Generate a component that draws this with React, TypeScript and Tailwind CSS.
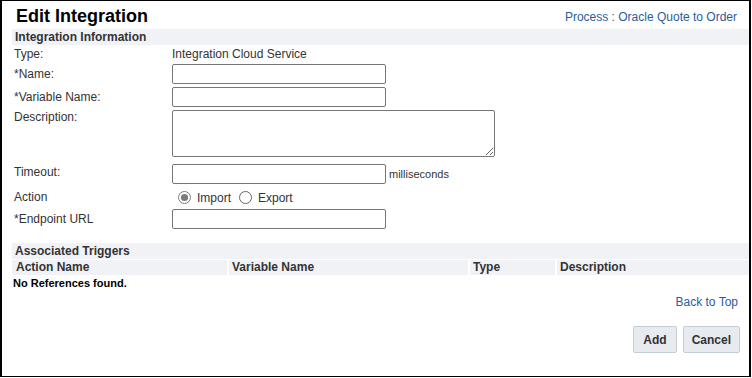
import React from 'react';

const Radio: React.FC<{ checked?: boolean }> = ({ checked }) => (
  <svg width="13" height="13" viewBox="0 0 13 13" className="shrink-0">
    <circle cx="6.5" cy="6.5" r="6" fill="#fff" stroke={checked ? '#7a7a7a' : '#666'} strokeWidth="1" />
    {checked && <circle cx="6.5" cy="6.5" r="3.6" fill="#7b7b7b" />}
  </svg>
);

const inputCls = 'block w-[214px] h-[20px] border border-[#767676] rounded-[2px] bg-white px-1 text-[12px] outline-none';

export default function App() {
  return (
    <div className="w-[751px] h-[377px] border-l-2 border-r-2 border-t border-b border-black bg-white text-[#333] font-['Liberation_Sans',Arial,sans-serif] text-[12px] flex flex-col">
      {/* page header */}
      <div className="h-[28px] flex justify-between items-start pl-[14px] pr-[12px]">
        <h1 className="mt-[5px] text-[18px] leading-[21px] font-bold text-black">Edit Integration</h1>
        <a href="#" className="mt-[8px] leading-[16px] text-[#2b5b9c]">Process : Oracle Quote to Order</a>
      </div>

      <div className="ml-[10px] h-[16px] bg-[#f1f2f6] pl-[3px] font-bold leading-[16px]">Integration Information</div>

      <div className="pl-[12px]">
        <div className="h-[17px] flex items-center">
          <span className="w-[158px]">Type:</span>
          <span>Integration Cloud Service</span>
        </div>
        <div className="h-[23px] flex items-center">
          <label className="w-[158px]">*Name:</label>
          <input className={inputCls} />
        </div>
        <div className="h-[23px] flex items-center">
          <label className="w-[158px]">*Variable Name:</label>
          <input className={inputCls} />
        </div>
        <div className="h-[51px] flex items-start">
          <label className="w-[158px] mt-[1px] leading-[16px]">Description:</label>
          <textarea className="block mt-[2px] w-[323px] h-[47px] border border-[#767676] rounded-[2px] bg-white px-1 text-[12px] outline-none" />
        </div>
        <div className="h-[27px] flex items-start">
          <label className="w-[158px] mt-[5px] leading-[16px]">Timeout:</label>
          <div className="mt-[5px] flex items-center gap-[3px]">
            <input className={inputCls} />
            <span className="text-[11px]">milliseconds</span>
          </div>
        </div>
        <div className="h-[22px] flex items-center">
          <span className="w-[158px]">Action</span>
          <div className="flex items-center pl-[6px] pt-[1px]">
            <Radio checked />
            <span className="ml-[6px] mr-[8px]">Import</span>
            <Radio />
            <span className="ml-[6px]">Export</span>
          </div>
        </div>
        <div className="h-[22px] flex items-center">
          <label className="w-[158px]">*Endpoint URL</label>
          <input className={inputCls} />
        </div>
      </div>

      <div className="mt-[13px] ml-[10px] h-[16px] bg-[#f1f2f6] pl-[3px] font-bold leading-[16px]">Associated Triggers</div>
      <div className="mt-[1px] ml-[10px] h-[15px] flex gap-[2px] font-bold leading-[15px]">
        <div className="w-[215px] bg-[#f1f2f6] pl-[4px]">Action Name</div>
        <div className="w-[239px] bg-[#f1f2f6] pl-[3px]">Variable Name</div>
        <div className="w-[85px] bg-[#f1f2f6] pl-[3px]">Type</div>
        <div className="flex-1 bg-[#f1f2f6] pl-[3px]">Description</div>
      </div>
      <div className="pl-[11px] h-[16px] leading-[16px] text-[11px] font-bold text-black">No References found.</div>

      <div className="mt-[3px] h-[16px] flex justify-end pr-[11px] leading-[16px]">
        <a href="#" className="text-[#2b5b9c]">Back to Top</a>
      </div>

      <div className="mt-[16px] flex justify-end gap-[6px] pr-[9px]">
        <button className="h-[27px] px-[9px] border border-[#c4ccd4] rounded-[2px] bg-[#e7ebef] font-bold text-[12px] text-[#333]">Add</button>
        <button className="h-[27px] px-[8px] border border-[#c4ccd4] rounded-[2px] bg-[#e7ebef] font-bold text-[12px] text-[#333]">Cancel</button>
      </div>
    </div>
  );
}
